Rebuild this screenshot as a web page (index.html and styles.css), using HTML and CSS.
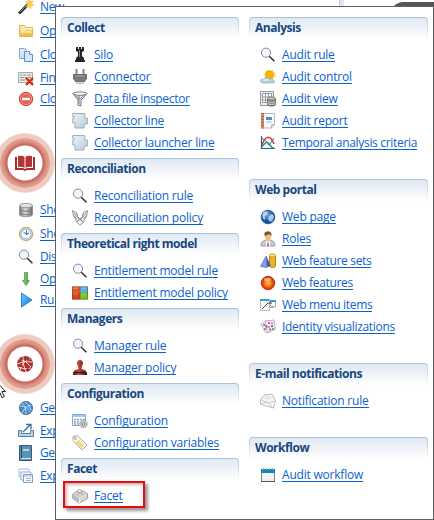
FILE: index.html
```html
<!DOCTYPE html>
<html lang="en">
<head>
<meta charset="utf-8">
<title>Menu</title>
<link rel="stylesheet" href="styles.css">
</head>
<body>
<svg class="sprite" aria-hidden="true">
<defs>
<linearGradient id="gold" x2="0" y2="1"><stop stop-color="#fff3b8"/><stop offset="1" stop-color="#e9b83c"/></linearGradient>
<linearGradient id="paper" x2="1" y2="1"><stop stop-color="#eef5fb"/><stop offset="1" stop-color="#b5cadb"/></linearGradient>
<linearGradient id="steel" x2="1" y2="0"><stop stop-color="#777"/><stop offset=".45" stop-color="#ddd"/><stop offset="1" stop-color="#666"/></linearGradient>
<linearGradient id="bluefill" x2="1" y2="1"><stop stop-color="#71caff"/><stop offset="1" stop-color="#0879dd"/></linearGradient>
<linearGradient id="greenfill" x2="1" y2="0"><stop stop-color="#a0d989"/><stop offset="1" stop-color="#3c9a35"/></linearGradient>
<linearGradient id="stampfill" x2="1" y2="0"><stop stop-color="#661010"/><stop offset=".4" stop-color="#c14842"/><stop offset="1" stop-color="#4f0909"/></linearGradient>
<radialGradient id="orange"><stop stop-color="#ffcb51"/><stop offset=".55" stop-color="#fb6a16"/><stop offset="1" stop-color="#c92c00"/></radialGradient>
<radialGradient id="sea" cx=".4" cy=".3"><stop stop-color="#80b8eb"/><stop offset="1" stop-color="#11519c"/></radialGradient>
</defs>
<symbol id="lens" viewBox="0 0 16 16"><circle cx="6" cy="5.700" r="4.600" fill="#f1f6ff" stroke="#858b98"/><path d="M9.300 9.200 14.400 14.300" stroke="#333" stroke-width="1.600"/></symbol>
<symbol id="wand" viewBox="0 0 16 16"><path d="M1 14.500 10 5.500" stroke="#333" stroke-width="3"/><path d="M2 13 9 6" stroke="#999" stroke-width=".7"/><path d="m11 0 1 3 3-1-1.500 3 2.500 1-3 1-.5 3-1.600-2.500L8 8l1.500-3L8 2.500l2.500.5z" fill="#ffd34d" stroke="#eca922" stroke-width=".5"/></symbol>
<symbol id="folder" viewBox="0 0 16 16"><path d="M1.500 13.500v-11h5l1.500 2h6.500v9z" fill="url(#gold)" stroke="#deb74f"/><path d="M3 7h4l1-1.500h6" stroke="#fff9d8" fill="none"/><path d="M3 9h10" stroke="#fff" opacity=".6"/></symbol>
<symbol id="copy" viewBox="0 0 16 16"><path d="M1.500 1.500h5l3 3v7h-8z" fill="url(#paper)" stroke="#7fa5ce"/><path d="M6.500 4.500h5l3 3v7h-8z" fill="#d3e8fb" stroke="#6093cc"/><path d="M11.500 4.500v3h3" fill="#fff" stroke="#6093cc"/></symbol>
<symbol id="board" viewBox="0 0 16 16"><path d="M.5 2.500h14v10H.5z" fill="#e9ebe7" stroke="#a5aaa2"/><path d="M2 5h2m1 0h3m1 0h4M2 7.500h4m1 0h2m1 0h3M2 10h5" stroke="#8b9190"/><path d="m8 8 7 7m0-7-7 7" stroke="#da2615" stroke-width="2.400"/></symbol>
<symbol id="minus" viewBox="0 0 16 16"><circle cx="8" cy="8" r="6.700" fill="#e96056" stroke="#cb3c35"/><circle cx="8" cy="8" r="5.600" fill="none" stroke="#f5a092" stroke-width=".8"/><path d="M4 8h8" stroke="#fff" stroke-width="2.500"/></symbol>
<symbol id="disks" viewBox="0 0 16 16"><path d="M1.500 3.500v9c0 3 13 3 13 0v-9" fill="url(#steel)" stroke="#999"/><path d="M1.500 7c0 3 13 3 13 0m-13 3.500c0 3 13 3 13 0" fill="none" stroke="#777"/><ellipse cx="8" cy="3.500" rx="6.500" ry="2.200" fill="#e0e0e0" stroke="#999"/></symbol>
<symbol id="clock" viewBox="0 0 16 16"><circle cx="8" cy="8" r="6.600" fill="#eef6ff" stroke="#c8a66b" stroke-width="1.200"/><circle cx="8" cy="8" r="5.100" fill="none" stroke="#86aed4"/><path d="M8.500 4.500v4l2.500-1.500M5.500 6l3 2.500" fill="none" stroke="#456b96"/></symbol>
<symbol id="down" viewBox="0 0 16 16"><path d="M6.500 1.500h3v8h2L8 14.500 4.500 9.500h2z" fill="url(#greenfill)" stroke="#569c48" stroke-width=".8"/></symbol>
<symbol id="play" viewBox="0 0 16 16"><path d="M3.500 1v14L14 8z" fill="url(#bluefill)" stroke="#2d83cd"/></symbol>
<symbol id="globe" viewBox="0 0 16 16"><circle cx="8" cy="8" r="6.800" fill="url(#sea)" stroke="#2c5c98"/><path d="M4 3c3-2 4 0 3 2S4 7 5 9s-1 2-2 0-1-4 1-6m5 4 3-2 2 2-1 4-3 2-2-3z" fill="#cbe3f9" opacity=".8"/></symbol>
<symbol id="mesh" viewBox="0 0 16 16"><circle cx="8" cy="8" r="6.600" fill="#4889ca" stroke="#527ba4"/><path d="M2 6c5 0 8 2 10 6M4 3c3 3 4 6 4 11M13 5c-4 1-7 4-9 8M7 2c3 2 5 5 6 8" stroke="#b8dbf8" fill="none"/></symbol>
<symbol id="export" viewBox="0 0 16 16"><path d="M3.500 7.500h-3v6h15v-6h-3v3h-9z" fill="#bbd2ea" stroke="#577fa9"/><path d="m5 9 7-7M8 1.500h5v5" stroke="#376c9c" stroke-width="1.300" fill="none"/></symbol>
<symbol id="book" viewBox="0 0 16 16"><path d="M1.500.500h12v15h-12z" fill="#5a91b6" stroke="#315b77"/><path d="M3.500 1v13" stroke="#204e6c"/><path d="M5 4h6v2H5z" fill="#b2d0e1"/><path d="M3 13.500h10" stroke="#d8e7ee"/></symbol>
<symbol id="sheets" viewBox="0 0 16 16"><path d="M1 1h10v8H1z" fill="#f7faff" stroke="#acbfd6"/><path d="M3 4h10v8H3z" fill="#f7faff" stroke="#94afcf"/><path d="M5.500 6.500h9v8h-9z" fill="#fff" stroke="#7e9dc2"/><path d="M6 8h8M8 10.500h5M8 12.500h5" stroke="#91afd2"/></symbol>
<symbol id="rook" viewBox="0 0 16 16"><path d="M4 0h2v2h1V0h2v2h1V0h2v4l-2 1v4l2 2v2h1v2H3v-2h1v-2l2-2V5L4 4z" fill="#252525"/><path d="M7.500 3v7" stroke="#888"/></symbol>
<symbol id="plug" viewBox="0 0 16 16"><path d="M4.500 0v6m7-6v6" stroke="#8c8c8c" stroke-width="2"/><path d="M1.500 5.500h13v4l-2 3h-9l-2-3z" fill="#777" stroke="#666"/><path d="M3 7h10" stroke="#aaa"/><path d="M5.500 12.500V15M8 12.500v3m2.500-3V15" stroke="#aaa" stroke-width="1.500"/></symbol>
<symbol id="funnel" viewBox="0 0 16 16"><path d="M.7 2.500 6 9v5l3 1V9l6-6.500" fill="#e5e5ea" stroke="#777782"/><ellipse cx="8" cy="2.600" rx="7" ry="1.700" fill="#f9f9fc" stroke="#777"/><path d="m4 5 4 3 4-4M7 5v8" stroke="#777782" fill="none" stroke-width=".8"/></symbol>
<symbol id="scroll" viewBox="0 0 16 16"><path d="M.8.600h12v3q-1 1 0 1.400h2.500v6H13q-1 0-1 1.500V15H3v-3.500q1-1 0-1.500H.8V5H2q1-1 0-1.500H.8z" fill="url(#paper)" stroke="#9aabb7"/></symbol>
<symbol id="hands" viewBox="0 0 16 16"><path d="m.500.500 4 2 1 4L8 9l2.500-2.500 1-4 4-2-1 6-2 3-1 3L8 15l-3.500-3-1-3-2-3zM1 2l4 5m-4-2 4 4m10-7-4 5m4-2-4 4M6 6 4 3m6 3 2-3M5 12l3-4 3 4m-6-5 6 5m0-5-6 5" fill="#f4f4f4" stroke="#8f8f8f" stroke-width=".9"/></symbol>
<symbol id="tiles" viewBox="0 0 16 16"><path d="M0 1.500h8v6H0z" fill="#e85420"/><path d="M8 1.500h8v6H8z" fill="#54aef1"/><path d="M0 7.500h8v7H0z" fill="#e43c12"/><path d="M8 7.500h8v7H8z" fill="#70cb24"/><path d="M1 3h5M9 3h5M9 9h5M1 9h5" stroke="#fff" opacity=".45"/><path d="M.4 1.900h15.200v12.200H.4zM8 2v12M0 8h16" fill="none" stroke="#6c5432" stroke-width=".6"/></symbol>
<symbol id="stamp" viewBox="0 0 16 16"><path d="M5 3c0-4 6-4 6 0 0 2-1.500 3-1.500 6l4 1.500L15 13v2H1v-2l1.500-2.500 4-1.500C6.500 6 5 5 5 3z" fill="url(#stampfill)"/><path d="M2 12.500h12" stroke="#351010"/></symbol>
<symbol id="gear" viewBox="0 0 16 16"><path d="M.500 1.500h13v11H.5z" fill="#fff" stroke="#86a9d4"/><path d="M1 3h12" stroke="#a8cbec" stroke-width="2"/><path d="M2 6.500h2m1 0h2m1 0h2m1 0h2M2 9h2m1 0h2M2 11h2m1 0h2" stroke="#8ea5bd" stroke-width="1.300"/><circle cx="11.500" cy="11" r="3.700" fill="#ccc" stroke="#888" stroke-dasharray="1.500 .8"/><circle cx="11.500" cy="11" r="1.300" fill="#fff" stroke="#777"/></symbol>
<symbol id="tag" viewBox="0 0 16 16"><path d="M1 5.500V1.200L5.500.8 15 10l-5 5z" fill="#fafafa" stroke="#aaa"/><path d="m6.500 4.500 5.700 5.700-3 3-5.700-5.700z" fill="#f3dc79"/><circle cx="3.400" cy="3.400" r="1" fill="#fff" stroke="#999"/></symbol>
<symbol id="brick" viewBox="0 0 16 16"><path d="m.600 6 7-4 8 3.500v5l-8 4.500-7-4.500z" fill="#d5d5d2" stroke="#a1a1a1"/><path d="m.600 6 7 3.500v5.500l-7-4.500z" fill="#bababa"/><path d="m1 6 6.600 3.500L15 5.500M7.600 9.500V15" fill="none" stroke="#f2f2f2"/><g fill="#eee" stroke="#999" stroke-width=".7"><ellipse cx="4" cy="5.500" rx="2" ry="1.300"/><ellipse cx="7.500" cy="3" rx="2" ry="1.500"/><ellipse cx="8" cy="7" rx="2" ry="1.300"/><ellipse cx="12" cy="5" rx="2" ry="1.300"/></g></symbol>
<symbol id="weather" viewBox="0 0 16 16"><path d="m9 0 1.500 2L13 .8l.4 2.300 2.400.7-1 2.200 1.100 2-2.400.800L12 11H7L4.500 9l.3-2-1.300-2 2-1L6 1.300l2 .5z" fill="#ffda6c"/><circle cx="9.500" cy="5.600" r="3.800" fill="#ffb700" stroke="#f49b10"/><path d="M1 13c-2-3 2-3 3-3 1-2 4-2 5 0 3-1 5 0 4 2 3 0 2 2-1 2H2z" fill="#bacfd6" stroke="#94aeb8" stroke-width=".7"/><path d="M3 11h6" stroke="#f5fbfe"/></symbol>
<symbol id="table" viewBox="0 0 16 16"><path d="M.500.500h13v14H.500z" fill="#eee" stroke="#999"/><path d="M2.500 2.500h9v9h-9zM5.500 2v10m3-10v10m-6-6h9m-9 3h9" fill="#fff" stroke="#8c99a6"/><path d="M7.500 7.500v6c0 2 8 2 8 0v-6" fill="#888" stroke="#666"/><path d="M7.500 10c0 2 8 2 8 0m-8 2c0 2 8 2 8 0" stroke="#ccc" fill="none"/><ellipse cx="11.500" cy="7.500" rx="4" ry="1.500" fill="#ccc" stroke="#777"/></symbol>
<symbol id="report" viewBox="0 0 16 16"><path d="M2.500.500h12v11l-3 3.500h-9z" fill="#f9f9f9" stroke="#b9b9b9"/><path d="m11.500 15 .3-3.200 2.700-.3" fill="#ddd" stroke="#aaa"/><path d="M2.500 0v15.500" stroke="#b66c43" stroke-width="3"/><path d="M1 2h3M1 5h3M1 8h3m-3 3h3m-3 3h3" stroke="#efc2a6" stroke-width=".7"/><path d="M6 4h6v3H6z" fill="#5587dc"/><path d="M6.500 9h5" stroke="#98b3df"/></symbol>
<symbol id="chart" viewBox="0 0 16 16"><path d="M1.500 1v12.500H15" fill="none" stroke="#345b98" stroke-width="1.200"/><path d="M2 10C5 1 10-1 14 9" fill="none" stroke="#ed2b37" stroke-width="1.500"/><path d="M2 12c5-7 6-5 8-2 1 2 2 3 4 3" fill="none" stroke="#35a53e" stroke-width="1.500"/><path d="m2 3 5 4 2 3 5-7M8 9l5 4" fill="none" stroke="#3276bd"/></symbol>
<symbol id="person" viewBox="0 0 16 16"><path d="M1 15c0-5 2-5 5-6h4c3 1 5 1 5 6z" fill="#c6c9d4" stroke="#a2a5af"/><path d="m6 9 2 2 2-2v6H6z" fill="#fff"/><path d="m8 10-1.200 5h2.600z" fill="#e2545b"/><path d="M5 3h6v3c0 2-1.500 3.500-3 3.500S5 8 5 6z" fill="#eebc7c"/><path d="M4.500 5V2c1-2 6-3 7 1v2l-2-2z" fill="#80521f"/></symbol>
<symbol id="shapes" viewBox="0 0 16 16"><path d="M9.500 2.500v10.500c0 2 6 2 6 0V2.500" fill="#e8b522" stroke="#b98709"/><ellipse cx="12.500" cy="2.500" rx="3" ry="1.600" fill="#ffe56c" stroke="#c99a19"/><path d="M6 3 .5 13.500l6 1z" fill="#879ce0"/><path d="M6 3 6.500 14.500l4-2z" fill="#3f5bb1"/><path d="M6 3 .500 13.500l6 1 4-2z" fill="none" stroke="#5265ae" stroke-width=".6"/></symbol>
<symbol id="orb" viewBox="0 0 16 16"><circle cx="8" cy="8" r="6.700" fill="url(#orange)" stroke="#be3609"/><ellipse cx="7.500" cy="4.600" rx="3.500" ry="1.800" fill="#fff" opacity=".45"/></symbol>
<symbol id="windows" viewBox="0 0 16 16"><path d="M.500 2.500h9v11h-9z" fill="#f9f9f9" stroke="#bbb"/><path d="M0 3h9" stroke="#38a4dd" stroke-width="2"/><path d="M10.500 3.500h5v6h-5z" fill="#fff" stroke="#aaa"/><path d="M10 4h6" stroke="#349dd8" stroke-width="2"/><path d="m2 12 6-6h4" fill="none" stroke="#444"/><path d="M10 10.500h4" stroke="#aaa"/></symbol>
<symbol id="cards" viewBox="0 0 16 16"><path d="m.700 5 5-3 5 8-5 4z" fill="#faf3fa" stroke="#c8b3c5"/><path d="m5 2 9-1 1.500 9-8 4z" fill="#f5eefc" stroke="#baaec9"/><g fill="#da58b0"><circle cx="4" cy="6" r="1.200"/><circle cx="9" cy="4" r="1.200"/><circle cx="10" cy="10.500" r="1.200"/></g><g fill="#7962da"><circle cx="6.500" cy="7.500" r="1.200"/><circle cx="12" cy="7" r="1.200"/></g><path d="M11 3h2v2h-2zM8 7h2v2H8z" fill="#eda62d"/><path d="M4 9h2v2H4zM12 9h2v2h-2z" fill="#57b964"/></symbol>
<symbol id="letter" viewBox="0 0 16 16"><path d="M.500 7 4 2l8-1 3.500 7-2 7-13-3.500z" fill="#f6f6f6" stroke="#bdbdbd"/><path d="m1 7 7 3 7-2M.700 11 7 9l6.500 6" fill="none" stroke="#c8c8c8"/><path d="m5 4 6-.5M4.500 6l7-.5" stroke="#ddd"/></symbol>
<symbol id="calendar" viewBox="0 0 16 16"><path d="M1.500 2.500h13v12h-13z" fill="#f3f3f1" stroke="#888"/><path d="M1 4h14" stroke="#1b86b6" stroke-width="4"/><path d="M3.500 1v2m3-2v2m3-2v2m3-2v2" stroke="#85b9cf"/><path d="M1 14.500h14" stroke="#555"/></symbol>
</svg>

<div class="screen">
  <div class="strip"><i class="splitter"></i><i class="tab"></i></div>
  <nav class="side">
    <div class="group first">
      <a><svg><use href="#wand"/></svg><span>New</span></a>
      <a><svg><use href="#folder"/></svg><span>Op</span></a>
      <a><svg><use href="#copy"/></svg><span>Clo</span></a>
      <a><svg><use href="#board"/></svg><span>Fin</span></a>
      <a><svg><use href="#minus"/></svg><span>Clo</span></a>
    </div>
    <div class="badge"><svg viewBox="0 0 22 16"><path d="M1 2h2v11h6l2 1 2-1h6V2h2v13h-8l-2 1-2-1H1z" fill="#a92c2c"/><path d="M4 1q5-1 6.500 1v11Q8 11 4 12zM18 1q-5-1-6.500 1v11Q14 11 18 12z" fill="#b53333"/></svg></div>
    <div class="group second">
      <a><svg><use href="#disks"/></svg><span>Sho</span></a>
      <a><svg><use href="#clock"/></svg><span>Sho</span></a>
      <a><svg><use href="#lens"/></svg><span>Dis</span></a>
      <a><svg><use href="#down"/></svg><span>Op</span></a>
      <a><svg><use href="#play"/></svg><span>Ru</span></a>
    </div>
    <div class="badge"><svg class="net" viewBox="0 0 18 18"><circle cx="9" cy="9" r="8" fill="#b02f2f"/><path d="M3 4q7 1 12 8M1 9q7-4 15-2M7 1q-1 8 3 16M4 15q2-8 10-11M2 12q6 3 13 1" fill="none" stroke="#fff" stroke-width=".8"/><path d="m4 4 2 1M11 5l2-1m-9 7 2-1m5 2 2 1" stroke="#b02f2f" stroke-width="3"/></svg></div>
    <div class="group third">
      <a><svg><use href="#mesh"/></svg><span>Ge</span></a>
      <a><svg><use href="#export"/></svg><span>Exp</span></a>
      <a><svg><use href="#book"/></svg><span>Ge</span></a>
      <a><svg><use href="#sheets"/></svg><span>Exp</span></a>
    </div>
    <svg class="pointer" viewBox="0 0 7 18"><path d="M-5-3 5.500 8.500H2l2.300 5-2.300 1.200L-.5 9" fill="#fff" stroke="#222"/></svg>
  </nav>

  <main class="menu">
    <div class="col left">
      <section><h2>Collect</h2>
        <a><svg><use href="#rook"/></svg><span>Silo</span></a>
        <a><svg><use href="#plug"/></svg><span>Connector</span></a>
        <a><svg><use href="#funnel"/></svg><span class="tight">Data file inspector</span></a>
        <a><svg><use href="#scroll"/></svg><span>Collector line</span></a>
        <a><svg><use href="#scroll"/></svg><span>Collector launcher line</span></a></section>
      <section><h2>Reconciliation</h2>
        <a><svg><use href="#lens"/></svg><span>Reconciliation rule</span></a>
        <a><svg><use href="#hands"/></svg><span>Reconciliation policy</span></a></section>
      <section><h2>Theoretical right model</h2>
        <a><svg><use href="#lens"/></svg><span>Entitlement model rule</span></a>
        <a><svg><use href="#tiles"/></svg><span>Entitlement model policy</span></a></section>
      <section><h2>Managers</h2>
        <a><svg><use href="#lens"/></svg><span>Manager rule</span></a>
        <a><svg><use href="#stamp"/></svg><span>Manager policy</span></a></section>
      <section><h2>Configuration</h2>
        <a><svg><use href="#gear"/></svg><span>Configuration</span></a>
        <a><svg><use href="#tag"/></svg><span>Configuration variables</span></a></section>
      <section><h2>Facet</h2>
        <a class="marked"><svg><use href="#brick"/></svg><span>Facet</span></a></section>
    </div>
    <div class="col right">
      <section><h2>Analysis</h2>
        <a><svg><use href="#lens"/></svg><span>Audit rule</span></a>
        <a><svg><use href="#weather"/></svg><span>Audit control</span></a>
        <a><svg><use href="#table"/></svg><span>Audit view</span></a>
        <a><svg><use href="#report"/></svg><span>Audit report</span></a>
        <a><svg><use href="#chart"/></svg><span class="tight">Temporal analysis criteria</span></a></section>
      <section><h2>Web portal</h2>
        <a><svg><use href="#globe"/></svg><span>Web page</span></a>
        <a><svg><use href="#person"/></svg><span>Roles</span></a>
        <a><svg><use href="#shapes"/></svg><span class="tight">Web feature sets</span></a>
        <a><svg><use href="#orb"/></svg><span class="tight">Web features</span></a>
        <a><svg><use href="#windows"/></svg><span class="tight">Web menu items</span></a>
        <a><svg><use href="#cards"/></svg><span class="tight">Identity visualizations</span></a></section>
      <section><h2>E-mail notifications</h2>
        <a><svg><use href="#letter"/></svg><span>Notification rule</span></a></section>
      <section><h2>Workflow</h2>
        <a><svg><use href="#calendar"/></svg><span>Audit workflow</span></a></section>
    </div>
  </main>
</div>
</body>
</html>
```
FILE: styles.css
```css
* { box-sizing: border-box; }
body { margin: 0; background: #fff; font: 12px/22px "Open Sans", "Noto Sans", sans-serif; }
.sprite { position: absolute; width: 0; height: 0; }
.screen { position: relative; width: 434px; height: 520px; overflow: hidden; }
a { display: flex; align-items: center; gap: 6px; height: 22px; color: #0c62cc; white-space: nowrap; }
a svg { width: 16px; height: 16px; flex: none; }
a span { height: 16px; margin-bottom: 2px; line-height: 18px; border-bottom: 1px solid #0c62cc; letter-spacing: -.21px; }
a .tight { letter-spacing: -.32px; }

.strip { position: absolute; top: 0; left: 0; width: 100%; height: 6px; overflow: hidden; }
.splitter { position: absolute; left: 339px; top: 0; width: 5px; height: 6px; background: #dfe5f8; border-left: 1px solid #c0c9e3; }
.tab { position: absolute; left: 391px; top: 2px; width: 60px; height: 16px; background: #555; border-radius: 12px 0 0 0; }

.side { width: 55px; height: 520px; }
.side a span { min-width: 16px; letter-spacing: -.4px; }
.group { display: grid; padding-left: 18px; align-items: center; }
.first { margin-top: -5px; grid-template-rows: 24px 24px 24px 21px 22px; height: 138px; align-content: start; }
.second { grid-template-rows: 25px 24px 22px 21px 22px; height: 141px; padding-top: 4px; align-content: start; }
.third { grid-template-rows: 24px 22px 22px 23px; padding-top: 2px; }
.badge { width: 60px; height: 60px; margin: 0 0 0 -5px; border-radius: 50%; display: grid; place-items: center;
  background: radial-gradient(circle closest-side, #fff 17px, #c5665b 18px, #cf796c 20px, #d98d7e 21px, #e1a393 24.500px, #efcbbf 25px, #efcbbf 29px, #f8e4dd 30px); }
.badge svg { width: 22px; height: 16px; }
.badge .net { width: 18px; height: 18px; }
.pointer { position: absolute; left: 0; top: 383px; width: 7px; height: 18px; }

.menu { position: absolute; left: 55px; top: 6px; width: 379px; height: 514px; border: 1px solid #606060; background: #fff;
  display: grid; grid-template-columns: 178px 179px; column-gap: 10px; padding: 10px 5px; }
.col { display: flex; flex-direction: column; gap: 4px; }
.right { gap: 25px; }
h2 { margin: 0 0 5px; height: 22px; padding-left: 5px; font-size: 12px; line-height: 19px; font-weight: 700; letter-spacing: -.46px; color: #17477e;
  border: 1px solid transparent; border-bottom: 0; border-radius: 4px 4px 0 0;
  background: linear-gradient(#dfe8f2, #fff) padding-box, linear-gradient(#aac1d9, #fff) border-box; }
.col a { padding-left: 11px; }
.marked { position: relative; }
.marked::after { content: ""; box-sizing: border-box; position: absolute; left: 2px; top: -4px; width: 82px; height: 27px; border: 2px solid #f00808;
  box-shadow: 3px 3px 3px #0006, inset 2px 2px 3px #0004; }
```
